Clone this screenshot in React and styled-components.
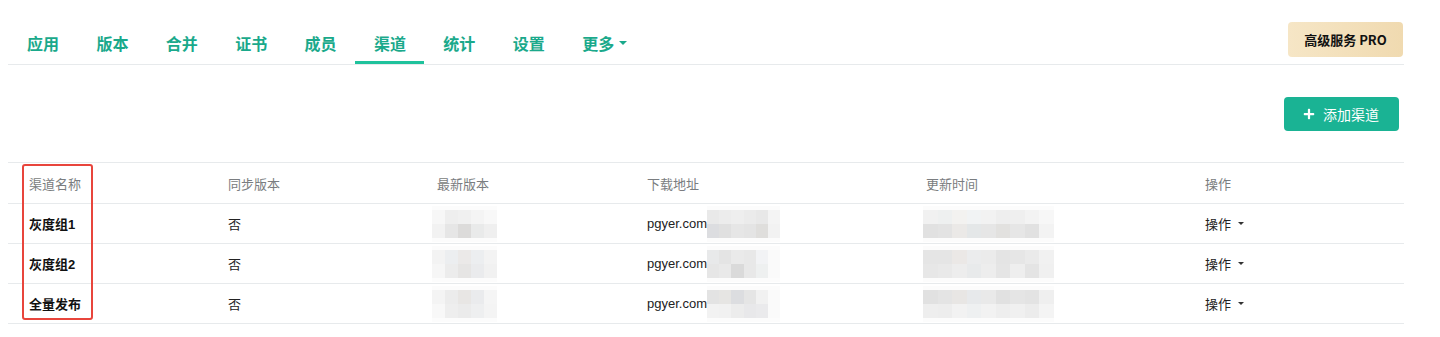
import React from 'react'
import styled, { createGlobalStyle } from 'styled-components'
import { FaPlus } from 'react-icons/fa'

const GlobalStyle = createGlobalStyle`
  html, body { margin: 0; padding: 0; background: #fff; }
  body {
    font-family: "Liberation Sans", "Noto Sans CJK SC", Arial, sans-serif;
    color: #333;
  }
`

const tabs = ['应用', '版本', '合并', '证书', '成员', '渠道', '统计', '设置']

const rows = [
  {
    name: '灰度组1',
    ver: [['#f7f7f7', '#eeeeee', '#f0f0f0', '#f4f4f4', '#f8f8f8'], ['#f2f2f2', '#e6e6e6', '#dcdbda', '#e9eaea', '#efefef']],
    url: [['#e9e9e9', '#ececec', '#eeeeee', '#ebebeb', '#e8e8e8', '#f4f4f4'], ['#dcdde0', '#e0e0e0', '#e6e6e6', '#e4e4e4', '#dfdedc', '#f2f2f2']],
    time: [['#f1f1f1', '#eef0f0', '#f3f2f0', '#f1f3f4', '#f2f2f2', '#eeeeee', '#efefef', '#f3f3f3', '#f7f7f7'], ['#e1e1e1', '#e3e3e3', '#ebe9e7', '#e4e7e8', '#e6e6e6', '#e2e1df', '#e6e6e6', '#e1e1e1', '#f3f3f3']]
  },
  {
    name: '灰度组2',
    ver: [['#f3f3f3', '#eceef0', '#ebe9e8', '#eceef0', '#f3f3f3'], ['#f6f6f6', '#ececec', '#e6e5e4', '#eaebed', '#f1f1f1']],
    url: [['#e8e9ea', '#e4e4e4', '#eaeaea', '#e8e8e8', '#f2f3f5', '#fafafa'], ['#e6e6e6', '#e9e9e9', '#dadada', '#e8e8e8', '#eef0f0', '#fafafa']],
    time: [['#e5e5e5', '#e5e5e5', '#ebe8e6', '#ebeced', '#ebebeb', '#e4e4e4', '#e6e6e6', '#eaeaea', '#f1f1f1'], ['#e7e7e7', '#e9e9e9', '#ededed', '#e8eaeb', '#ededed', '#e5e5e5', '#eeeeee', '#e4e4e4', '#f0f0f0']]
  },
  {
    name: '全量发布',
    ver: [['#f4f4f4', '#ececec', '#e8e6e4', '#eaebed', '#f5f5f5'], ['#f8f8f8', '#eeeeee', '#ebebeb', '#eeeff0', '#f4f4f4']],
    url: [['#e3e3e3', '#e6e5e3', '#dcdde0', '#e5e5e5', '#f1f1f1', '#fafafa'], ['#f2f2f2', '#f1f1f1', '#ececec', '#e8e8ea', '#eaeaec', '#fafafa']],
    time: [['#e1e1e1', '#e4e4e4', '#e8e6e4', '#e7e9eb', '#e9e9e9', '#e1e1e1', '#e5e5e5', '#e3e3e3', '#efefef'], ['#eeeeee', '#ededed', '#f2f2f2', '#eef0f1', '#f2f2f2', '#eeeeee', '#f0f0f0', '#ececec', '#f4f4f4']]
  }
]

function Mosaic({ grid, w, lead }) {
  return (
    <MosaicBox $n={grid[0].length} $w={w} $lead={lead}>
      {grid.map((r, i) =>
        r.map((c, j) => <Pixel key={i + '-' + j} $c={c} />)
      )}
    </MosaicBox>
  )
}

function App() {
  return (
    <Page>
      <GlobalStyle />
      <Header>
        <Tabs>
          {tabs.map(t => (
            <Tab key={t} $active={t === '渠道'}>{t}</Tab>
          ))}
          <Tab>
            更多<Caret $size={4} />
          </Tab>
        </Tabs>
        <ProButton>高级服务 PRO</ProButton>
      </Header>
      <Toolbar>
        <AddButton>
          <FaPlus size={12} />
          <span>添加渠道</span>
        </AddButton>
      </Toolbar>
      <TableWrap>
        <HeadRow>
          <Cell>渠道名称</Cell>
          <Cell>同步版本</Cell>
          <Cell>最新版本</Cell>
          <Cell>下载地址</Cell>
          <Cell>更新时间</Cell>
          <Cell>操作</Cell>
        </HeadRow>
        {rows.map(r => (
          <Row key={r.name}>
            <Cell $bold>{r.name}</Cell>
            <Cell>否</Cell>
            <Cell>
              <Mosaic grid={r.ver} w={13} lead={-5} />
            </Cell>
            <Cell>
              pgyer.com
              <Mosaic grid={r.url} w={12.2} lead={0} />
            </Cell>
            <Cell>
              <Mosaic grid={r.time} w={14.5} lead={-3} />
            </Cell>
            <Cell>
              操作<Caret $size={3.5} $gap={7} $dark />
            </Cell>
          </Row>
        ))}
        <Mark />
      </TableWrap>
    </Page>
  )
}

export default App

const Page = styled.div`
  padding: 0 36px 0 8px;
`

const Header = styled.div`
  display: flex;
  justify-content: space-between;
  align-items: flex-start;
  height: 64px;
  border-bottom: 1px solid #e7eaec;
`

const Tabs = styled.div`
  display: flex;
  align-self: flex-end;
`

const Tab = styled.div`
  box-sizing: border-box;
  height: 42px;
  width: 69.4px;
  padding-left: 19px;
  padding-top: 2px;
  display: flex;
  align-items: center;
  font-family: "Noto Sans CJK SC", sans-serif;
  font-size: 16px;
  font-weight: 700;
  color: #1aa98b;
  border-bottom: 3px solid ${p => (p.$active ? '#1fc29c' : 'transparent')};
  white-space: nowrap;
`

const Caret = styled.span`
  display: inline-block;
  width: 0;
  height: 0;
  margin-left: ${p => p.$gap || 5}px;
  border-left: ${p => p.$size}px solid transparent;
  border-right: ${p => p.$size}px solid transparent;
  border-top: ${p => p.$size}px solid ${p => (p.$dark ? '#333' : '#1aa98b')};
`

const ProButton = styled.div`
  margin-top: 22px;
  margin-right: 1px;
  width: 115px;
  height: 35px;
  display: flex;
  align-items: center;
  justify-content: center;
  border-radius: 4px;
  background: linear-gradient(90deg, #f6e6c6, #f0dab0);
  color: #111;
  font-size: 13px;
  font-weight: 700;
  font-family: "Noto Sans CJK SC", sans-serif;
`

const Toolbar = styled.div`
  display: flex;
  justify-content: flex-end;
  padding: 32px 5px 31px 0;
`

const AddButton = styled.div`
  width: 115px;
  height: 34px;
  box-sizing: border-box;
  display: flex;
  align-items: center;
  gap: 8px;
  padding-left: 19px;
  border-radius: 4px;
  background: #1ab394;
  color: #fff;
  font-size: 14px;
  font-family: "Noto Sans CJK SC", sans-serif;
`

const TableWrap = styled.div`
  position: relative;
  border-bottom: 1px solid #e7eaec;
`

const Row = styled.div`
  box-sizing: border-box;
  display: grid;
  grid-template-columns: 199px 209px 210px 279px 279px 1fr;
  height: 40px;
  border-top: 1px solid #e7eaec;
  align-items: center;
  font-size: 13px;
  color: #222;
`

const HeadRow = styled(Row)`
  height: 41px;
  color: #7a7d80;
`

const Cell = styled.div`
  display: flex;
  align-items: center;
  padding-left: 21px;
  font-weight: ${p => (p.$bold ? 700 : 400)};
  color: ${p => (p.$bold ? '#111' : 'inherit')};
  white-space: nowrap;
`

const MosaicBox = styled.div`
  position: relative;
  display: grid;
  grid-template-columns: repeat(${p => p.$n}, ${p => p.$w}px);
  grid-template-rows: 14px 14px;
  margin-left: ${p => p.$lead}px;
  padding: 4px 0;
  background: #fcfcfc;
`

const Pixel = styled.span`
  display: block;
  background: ${p => p.$c};
`

const Mark = styled.div`
  position: absolute;
  left: 14px;
  top: 2px;
  width: 71px;
  height: 156px;
  box-sizing: border-box;
  border: 2px solid #e8453c;
  border-radius: 3px;
`
